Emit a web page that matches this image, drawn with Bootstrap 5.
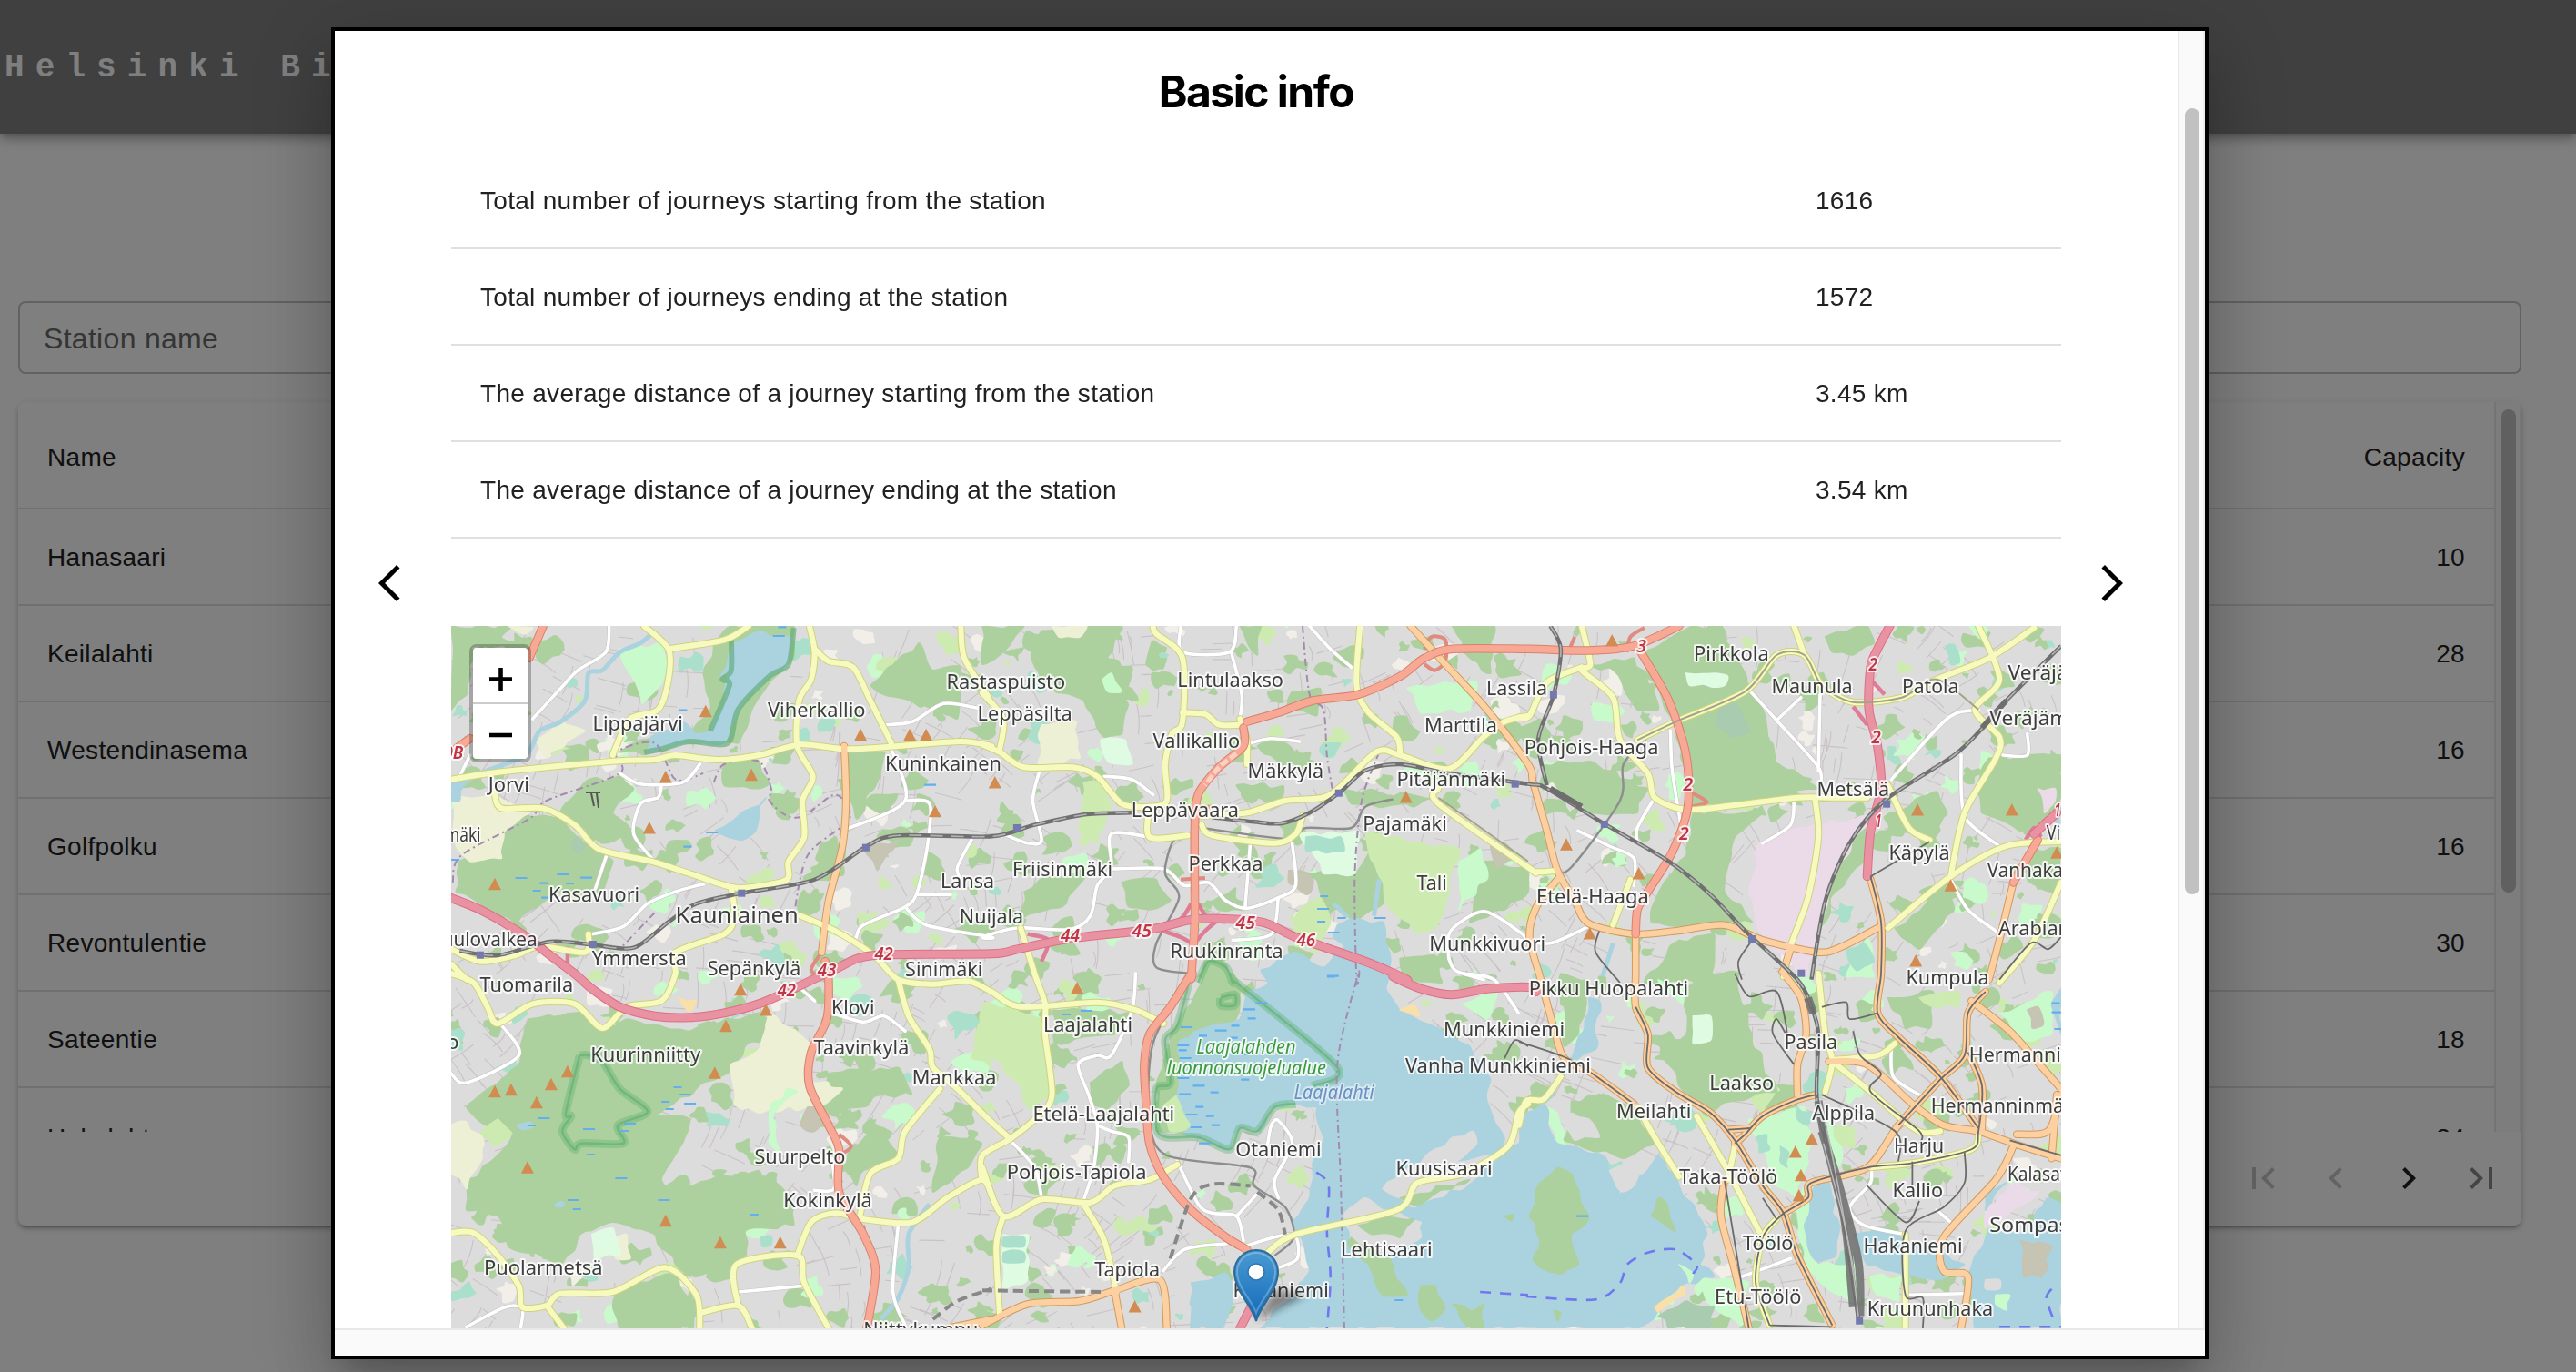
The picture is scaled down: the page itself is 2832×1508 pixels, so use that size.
<!DOCTYPE html>
<html lang="en">
<head>
<meta charset="utf-8">
<title>Helsinki Bikes</title>
<meta name="viewport" content="width=device-width, initial-scale=1">
<link href="https://cdn.jsdelivr.net/npm/bootstrap@5.3.0/dist/css/bootstrap.min.css" rel="stylesheet">
<style>
html,body{height:100%;overflow:hidden}
body{font-family:"Liberation Sans",Arial,sans-serif;font-size:28px;letter-spacing:.3px;color:#212121;line-height:40px;background:#fff}
.app-head{height:147px;background:#808080;color:#fff;box-shadow:0 4px 8px -2px rgba(0,0,0,.2),0 8px 10px 0 rgba(0,0,0,.14),0 2px 20px 0 rgba(0,0,0,.12);position:relative}
.app-title{font:700 36px/40px "Courier New","Liberation Mono",monospace;letter-spacing:12.1px;padding:3px 0 0 5px;white-space:nowrap}
.app-main{padding:184px 60px 0 20px}
.search-box{height:80px;border:2px solid #c4c4c4;border-radius:8px;padding:2px 0 0 26px;font-size:32px;color:#6b6b6b}
.station-card{margin-top:31px;height:905px;border-radius:8px;overflow:hidden;box-shadow:0 6px 2px -4px rgba(0,0,0,.2),0 4px 4px 0 rgba(0,0,0,.14),0 2px 10px 0 rgba(0,0,0,.12)}
.station-scroll{height:802px}
.line-row{height:106px;border-bottom:2px solid #e0e0e0;padding:2px 32px 0;flex:none}
.line-row.first{height:118px;padding-top:5px}
.station-scroll .line-row:last-child{padding-top:6px}
.track{width:30px;background:#fafafa;border-left:2px solid #e8e8e8;border-right:2px solid #ededed;padding-left:6px;flex:none}
.thumb{width:16px;border-radius:8px;background:#c1c1c1}
.pager{height:102px;padding-right:4px}
.pager-btn{width:80px;height:80px;padding:16px;border:0;background:none;line-height:0}
.info-modal{position:absolute;left:364px;top:30px;width:2064px;height:1464px;border:4px solid #000;background:#fff;box-shadow:0 22px 30px -14px rgba(0,0,0,.2),0 48px 76px 6px rgba(0,0,0,.14),0 18px 92px 16px rgba(0,0,0,.12)}
.info-body{height:1426px;overflow:hidden}
.side{width:128px;padding-top:583px;line-height:0}
.info-title{font:700 48px/58px Inter,sans-serif;letter-spacing:-1.5px;color:#000;margin:38px 0}
.info-value{width:270px;padding-left:32px}
.map-wrap{margin-top:96px;height:772px;position:relative}
.map-wrap>svg{display:block}
.bottom-track{height:30px;background:#fafafa;border-top:2px solid #e8e8e8}
.zoom-box{position:absolute;left:20px;top:20px;border:4px solid rgba(0,0,0,.25);border-radius:8px;background-clip:padding-box;overflow:hidden}
.zoom-btn{width:60px;height:60px;background:#fff;border:0;padding:0;display:block;line-height:0}
.zoom-btn+.zoom-btn{border-top:2px solid #ccc;height:62px}
#map text{font-family:"Noto Sans",sans-serif;fill:#3d3d3d;paint-order:stroke;stroke:#fff;stroke-opacity:.8;stroke-width:4px;stroke-linejoin:round;letter-spacing:0}
</style>
<script src="https://cdn.jsdelivr.net/npm/bootstrap@5.3.0/dist/js/bootstrap.bundle.min.js"></script>
</head>
<body>
<header class="app-head d-flex align-items-center"><div class="app-title">Helsinki Bikes</div></header>
<main class="app-main">
  <div class="search-box d-flex align-items-center">Station name</div>
  <div class="station-card bg-white">
    <div class="station-scroll d-flex overflow-hidden">
      <div class="flex-grow-1 d-flex flex-column">
        <div class="line-row first d-flex align-items-center justify-content-between"><span>Name</span><span>Capacity</span></div>
        <div class="line-row d-flex align-items-center justify-content-between"><span>Hanasaari</span><span>10</span></div>
        <div class="line-row d-flex align-items-center justify-content-between"><span>Keilalahti</span><span>28</span></div>
        <div class="line-row d-flex align-items-center justify-content-between"><span>Westendinasema</span><span>16</span></div>
        <div class="line-row d-flex align-items-center justify-content-between"><span>Golfpolku</span><span>16</span></div>
        <div class="line-row d-flex align-items-center justify-content-between"><span>Revontulentie</span><span>30</span></div>
        <div class="line-row d-flex align-items-center justify-content-between"><span>Sateentie</span><span>18</span></div>
        <div class="line-row d-flex align-items-center justify-content-between"><span>Hakalehto</span><span>24</span></div>
      </div>
      <div class="track pt-2"><div class="thumb" style="height:531px"></div></div>
    </div>
    <div class="pager d-flex align-items-center justify-content-end">
      <button class="pager-btn" aria-label="First page"><svg width="48" height="48" viewBox="0 0 24 24" fill="#c6c6c6"><path d="M18.41 16.59L13.82 12l4.59-4.59L17 6l-6 6 6 6zM6 6h2v12H6z"/></svg></button>
      <button class="pager-btn" aria-label="Previous page"><svg width="48" height="48" viewBox="0 0 24 24" fill="#c6c6c6"><path d="M15.41 16.59L10.83 12l4.58-4.59L14 6l-6 6 6 6z"/></svg></button>
      <button class="pager-btn" aria-label="Next page"><svg width="48" height="48" viewBox="0 0 24 24" fill="#212121"><path d="M10 6L8.59 7.41 13.17 12l-4.58 4.59L10 18l6-6z"/></svg></button>
      <button class="pager-btn" aria-label="Last page"><svg width="48" height="48" viewBox="0 0 24 24" fill="#8a8a8a"><path d="M5.59 7.41L10.18 12l-4.59 4.59L7 18l6-6-6-6zM16 6h2v12h-2z"/></svg></button>
    </div>
  </div>
</main>
<div class="modal-backdrop show"></div>
<div class="modal d-block overflow-hidden" role="dialog">
  <div class="info-modal">
    <div class="d-flex">
      <div class="info-body d-flex flex-grow-1">
        <div class="side"><svg width="48" height="48" viewBox="0 0 24 24" style="margin-left:36px"><path d="M17.77 3.77 16 2 6 12l10 10 1.77-1.77L9.54 12z"/></svg></div>
        <div class="flex-grow-1">
          <h2 class="info-title text-center">Basic info</h2>
          <div class="line-row d-flex align-items-center"><span class="flex-grow-1">Total number of journeys starting from the station</span><span class="info-value">1616</span></div>
          <div class="line-row d-flex align-items-center"><span class="flex-grow-1">Total number of journeys ending at the station</span><span class="info-value">1572</span></div>
          <div class="line-row d-flex align-items-center"><span class="flex-grow-1">The average distance of a journey starting from the station</span><span class="info-value">3.45 km</span></div>
          <div class="line-row d-flex align-items-center"><span class="flex-grow-1">The average distance of a journey ending at the station</span><span class="info-value">3.54 km</span></div>
          <div class="map-wrap">
            <svg id="map" width="1770" height="772" viewBox="496 688 1770 772"></svg>
            <div class="zoom-box">
              <button class="zoom-btn" aria-label="Zoom in"><svg width="60" height="60"><path d="M18 34.5h25M30.5 22v25" stroke="#000" stroke-width="4.6"/></svg></button>
              <button class="zoom-btn" aria-label="Zoom out"><svg width="60" height="60"><path d="M18 34h25" stroke="#000" stroke-width="4.6"/></svg></button>
            </div>
          </div>
        </div>
        <div class="side"><svg width="48" height="48" viewBox="0 0 24 24" style="margin-left:32px"><path d="M6.23 20.23 8 22l10-10L8 2 6.23 3.77 14.46 12z"/></svg></div>
      </div>
      <div class="track" style="padding-top:85px"><div class="thumb" style="height:864px"></div></div>
    </div>
    <div class="bottom-track"></div>
  </div>
</div>
<script>
// Map sheets: every geometry string starts with a sheet letter and lists x,y pairs in that sheet's grid.
const sheet={A:[490,680],B:[1080,680],C:[1670,680],D:[490,1070],E:[1080,1070],F:[1670,1070]};
const KX=600/1568,KY=1/3;
function pts(s){let o=sheet.A;const r=[];for(const t of s.trim().split(/\s+/)){if(sheet[t]){o=sheet[t];continue}const[x,y]=t.split(',').map(Number);r.push([o[0]+x*KX,o[1]+y*KY])}return r}
const f=n=>n.toFixed(1);
function curve(p){let d='M'+f(p[0][0])+' '+f(p[0][1]);for(let i=0;i<p.length-1;i++){const a=p[i-1]||p[i],b=p[i],c=p[i+1],e=p[i+2]||c,k=7;d+='C'+[b[0]+(c[0]-a[0])/k,b[1]+(c[1]-a[1])/k,c[0]-(e[0]-b[0])/k,c[1]-(e[1]-b[1])/k,c[0],c[1]].map(f).join(' ')}return d}
let seed=7;const rnd=()=>(seed=(seed*16807)%2147483647)/2147483647;
// shoreline and forest edges get small irregularities between their corner points
function rough(p){const r=[];for(let i=0;i<p.length;i++){const a=p[i],b=p[(i+1)%p.length],L=Math.hypot(b[0]-a[0],b[1]-a[1]),n=Math.max(1,Math.round(L/11));for(let j=0;j<n;j++){const t=j/n,q=j?6:0;r.push([a[0]+(b[0]-a[0])*t+(rnd()-.5)*q,a[1]+(b[1]-a[1])*t+(rnd()-.5)*q])}}r.push(r[0]);return r}
let out='<rect x="496" y="688" width="1770" height="772" fill="#dddcdc"/>';
const area=(c,l,extra='')=>{for(const s of l)out+=`<path d="${curve(rough(pts(s)))}Z" fill="${c}" stroke="${c}" stroke-width="1.5" stroke-linejoin="round" ${extra}/>`};
const line=(c,w,l,extra='')=>{out+=`<g fill="none" stroke="${c}" stroke-width="${w}" stroke-linejoin="round" ${extra}>`+l.map(s=>`<path d="${curve(pts(s))}"/>`).join('')+'</g>'};
const road=(c,cs,w,l)=>{line(cs,w+2,l,'stroke-linecap="round"');return()=>line(c,w,l,'stroke-linecap="round"')};
function blob(x,y,r,c){const p=[];for(let i=0;i<10;i++){const a=i/10*6.283,q=r*(.4+rnd()*.8);p.push([x+Math.cos(a)*q*1.2,y+Math.sin(a)*q])}p.push(p[0]);out+=`<path d="${curve(p)}Z" fill="${c}"/>`}
// residential texture: side streets and small greens
let mesh='';for(let i=0;i<1700;i++){const x=490+rnd()*1780,y=685+rnd()*780,a=(Math.sin(x/170)+Math.cos(y/120))*.8+(rnd()<.5?0:1.57),L=12+rnd()*28;mesh+=`M${f(x)} ${f(y)}q${f(Math.cos(a)*L/2+rnd()*5)} ${f(Math.sin(a)*L/2)} ${f(Math.cos(a)*L)} ${f(Math.sin(a)*L)}`}
out+=`<path d="${mesh}" fill="none" stroke="#c9c2c6" stroke-width="1.1"/>`;
for(let i=0;i<1050;i++){const q=rnd();blob(490+rnd()*1780,685+rnd()*780,3+rnd()*13,q<.58?'#add19e':q<.72?'#cdebb0':q<.86?'#c8facc':q<.94?'#f2efe9':'#aae0cb')}
area('#add19e',[
'A 16,24 190,24 160,60 240,95 75,95 60,250 16,300','A 40,800 170,740 200,640 330,660 400,740 480,800 450,900 380,930 330,900 240,960 200,1010 100,940 30,900','A 380,570 500,520 540,560 480,640 530,700 450,740 380,680 330,640',
'A 740,180 800,40 820,24 1000,24 1000,130 900,260 840,410 760,400 600,440 500,440 560,400 700,380 760,300','A 1220,220 1360,80 1400,170 1480,160 1470,330 1300,260 1240,240','A 800,480 900,470 930,540 880,560 800,550','A 1160,440 1260,440 1230,560 1180,660 1160,560','A 1030,850 1130,770 1100,860 1030,870','A 930,580 1020,600 1000,640 940,620',
'B 0,24 120,24 60,110 0,150','B 170,40 290,24 400,24 360,130 430,160 400,380 350,390 290,270 170,210 140,120','B 890,240 970,230 960,320 880,300','B 740,24 800,24 790,120','B 790,420 870,410 920,470 860,480','B 1030,560 1300,590 1240,620 1060,610','B 1120,740 1180,800 1190,900 1140,950 1080,990 980,950 960,860 910,830 1070,840','B 1440,800 1568,820 1568,900 1500,960 1400,1000 1420,900','B 400,870 500,860 540,930 480,960 420,950','B 120,900 200,850 300,830 240,940 110,990','B 1200,1120 1300,1110 1320,1200 1220,1190','B 1350,24 1470,24 1460,180 1400,130',
'C 350,130 500,24 580,24 640,160 700,300 740,480 860,560 700,600 500,620 490,560 440,330','C 500,640 700,640 620,720 590,900 670,1000 500,1010 380,1000 380,960 440,840 480,780','C 560,420 740,480 840,530 700,610 520,600','C 880,60 1000,24 1020,80 960,120 900,110','C 1350,460 1557,450 1557,640 1440,700 1330,640 1310,560','C 1070,640 1200,570 1230,640 1180,710 1100,700','C 60,480 200,470 370,560 340,640 200,640 100,540','C 0,360 60,330 90,380 50,460 20,440','C 200,150 330,130 370,210 400,300 340,300 280,180','C 900,720 1000,660 990,800 910,900 860,1050 850,1000','C 1480,760 1557,760 1540,900 1460,860','C 460,1060 560,1040 560,1200 360,1200','C 1080,1020 1240,880 1250,960 1150,1090',
'D 240,150 400,130 470,180 520,150 700,190 900,130 960,200 860,240 820,320 720,380 600,470 700,480 680,560 620,680 640,710 760,680 900,650 960,700 1000,760 1000,830 860,850 860,950 720,1000 660,960 600,860 480,820 400,850 330,960 180,900 150,800 60,780 60,680 130,620 190,530 100,490 60,440 210,300','D 500,1040 640,990 720,1080 710,1170 500,1170 480,1100','D 1040,470 1100,330 1300,310 1340,400 1260,400 1120,470','D 1160,570 1250,510 1300,600 1200,650 1180,700 1150,650','D 1420,540 1540,560 1500,640 1400,720',
'E 600,100 640,0 720,0 740,40 740,90 720,160 640,180 580,220 560,400 600,520 500,520 500,380 540,200','E 310,360 400,290 420,370 360,440 310,420','B 620,1180 640,1130 700,1140 720,1200','E 200,120 420,130 380,200 210,230','E 0,1110 60,1120 40,1170 0,1170',
'F 500,0 630,0 640,100 700,300 740,390 620,420 540,470 500,420 430,300 390,280 430,240 480,200 480,80','F 1060,80 1190,60 1180,180 1110,180','F 120,0 200,20 170,200 130,240','F 1380,160 1450,100 1420,180']);
area('#cdebb0',['E 0,100 80,110 170,150 200,300 200,400 140,450 90,350 0,230','B 1100,700 1170,720 1370,760 1340,900 1300,1020 1240,1030 1160,940','D 1530,170 1568,130 1568,310 1510,280','D 150,480 190,530 140,570 100,530','B 290,540 350,540 370,620 330,740 280,700','E 560,400 600,500 540,520 520,440','B 900,980 970,920 1000,1000 960,1100 900,1080','F 1000,1000 1090,1000 1080,1060 1020,1050','E 380,840 460,800 500,840 400,860','F 1150,80 1260,60 1260,110 1170,100']);
area('#eef0d5',['A 16,590 140,580 240,640 170,700 160,790 70,800 30,750','D 930,130 1060,240 1040,350 1140,380 1090,430 900,460 830,430 820,300 900,250','D 16,500 60,490 110,560 90,640 60,710 16,660','A 260,400 330,340 400,370 290,460','B 170,350 270,340 280,460 160,480','B 200,24 300,24 280,60 220,60','A 180,24 230,50 250,30','D 470,880 520,860 530,940 490,940']);
area('#c8facc',['A 500,100 630,80 630,180 600,240 565,280 540,200','B 1220,230 1420,210 1400,300 1260,310','B 1370,800 1430,760 1450,860 1370,960','B 345,200 370,180 400,240 360,240','D 930,450 980,380 1010,390 940,470 960,590 930,560','F 560,1100 500,990 560,1010 660,1020 640,1160','F 660,480 820,440 840,560 800,740 740,700','F 820,700 840,760 830,900 860,960 980,960 980,1080 900,1050 820,960 800,800','F 1380,130 1530,60 1530,200 1450,220','F 880,440 930,600 900,660 880,560','C 1000,1050 1020,1180 940,1180','E 1380,100 1480,60 1450,150','F 80,440 110,560 140,580 110,460','F 400,20 480,40 470,100 410,60']);
area('#dffce2',['B 910,710 1080,700 1070,840 980,840','C 480,180 600,190 590,220 490,220','D 420,860 480,840 500,930 430,940','E 60,860 130,860 130,1010 60,1040','F 500,140 550,140 550,220 500,230','B 340,400 410,400 430,480 360,470']);
area('#aae0cb',['B 930,720 1030,720 1040,765 930,765','F 680,540 710,530 720,580 690,590','F 750,570 775,590 770,640 750,620','F 800,440 840,460 830,500 800,480','C 940,1090 990,1070 1020,1130 970,1160','E 60,870 120,870 120,900 60,900','E 60,920 120,920 120,950 60,950','D 905,870 935,865 935,895 910,900','C 1225,90 1250,85 1265,145 1240,150']);
area('#c6c4b3',['A 1200,760 1300,730 1240,830','D 1040,440 1100,460 1060,520 1020,500','F 1460,120 1490,110 1505,170 1475,180','B 880,830 950,860 930,910 880,870','B 1460,750 1500,740 1530,790 1480,820']);
area('#ebdbe8',['C 690,740 850,680 1010,650 900,850 830,1180 740,1100 680,1000 660,900','C 1490,560 1540,560 1540,600 1510,640','F 1420,690 1490,720 1380,820 1340,840 1345,770']);
area('#a9cbaf',['C 580,290 620,280 665,370 610,390 565,350','A 360,740 380,720 400,750 380,775']);
area('#aad3df',['A 830,80 880,50 990,60 980,150 930,190 840,300 800,410 700,405 620,430 580,440 590,390 680,340 720,380 760,370 800,280 810,180 790,190',
'A 920,590 890,700 850,730 775,700 850,640',
'B 1020,1010 1060,990 1150,1000 1170,1100 1170,1150 E 1160,50 1200,120 1290,170 1400,240 1460,350 1450,420 1490,520 1500,570 F 0,560 10,480 70,430 110,560 250,610 290,730 400,600 460,700 500,760 540,860 520,960 560,1000 480,1020 400,1110 340,1170 E 800,1170 850,1100 900,1050 940,980 920,880 890,820 940,740 950,620 980,540 960,440 900,430 840,440 790,520 740,510 710,580 620,540 580,530 600,500 560,400 570,220 640,180 740,150 760,60 B 820,1200 800,1160 900,1100 980,1150 1040,1080 1010,1050',
'E 600,1020 700,990 720,1060 690,1170 600,1170','F 850,700 890,690 920,850 910,930 860,950 830,900 820,830','F 960,860 1050,840 1110,880 1280,960 1200,1010 1100,990 1000,960','F 1557,760 1520,740 1440,860 1350,840 1310,930 1290,1000 1310,1170 1557,1170','F 1340,730 1400,690 1340,780','F 200,80 230,90 220,250 170,280 100,400 70,430 130,300 160,250 190,150','F 1557,50 1530,100 1557,200','D 205,500 240,490 250,505 220,515','D 315,760 335,752 340,765 320,770','A 16,540 60,540 40,600 16,600','C 1557,620 1540,650 1557,700']);
area('#c6c4b3',['F 1440,880 1530,900 1500,1000 1450,1000']);
area('#dddcdc',['E 1150,710 1300,580 1410,520 1420,560 1360,620 1480,600 1400,690 1240,770 1200,740','E 1040,790 1100,740 1130,760 1260,820 1260,870 1170,920 1060,890','F 260,650 300,630 370,640 300,720','F 1340,1010 1380,1010 1380,1040 1340,1040']);
area('#add19e',['E 1200,740 1400,680 1250,765','E 1060,870 1100,900 1170,940 1220,1060 1150,1060 1110,960 1050,890','E 1080,830 1150,800 1240,810 1200,870 1120,860','F 60,690 110,640 150,660 200,800 150,860 170,960 120,990 80,980 40,940 60,880 30,800','E 1260,1030 1300,1030 1330,1100 1290,1145 1260,1110','E 1350,1090 1400,1110 1440,1090 1440,1170 1390,1160','F 380,800 400,740 430,780 450,850','F 150,420 250,400 330,440 390,560 300,610 130,550','F 100,1110 120,1120 110,1145','E 1500,800 1525,795 1520,815']);
area('#c8facc',['F 1370,1060 1410,1060 1400,1110 1370,1090','F 1010,1000 1100,1000 1090,1080 1030,1060','F 460,960 500,990 490,1020']);
area('#a9cbaf',['F 400,1130 480,1080 560,1100 550,1170 430,1170']);
area('#f9e0a8',['F 390,1100 470,1030 475,1060 400,1115','E 1200,120 1240,105 1255,140','D 670,80 720,90 700,125']);
area('#dddcdc',['F 120,460 200,480 230,540 160,550']);
line('#aad3df',5,['A 600,40 560,80 500,110 450,170 410,180 400,270 330,340 270,370 230,450 120,500 16,560','D 1390,760 1330,860 1330,970 1300,1070 1250,1140','B 1140,860 1125,980','C 270,1070 240,1180','B 1010,940 1050,985']);
// nature reserve outlines
const reserve=['B 620,1200 650,1130 700,1150 720,1200 E 740,40 1020,310 950,370','E 900,430 840,440 790,520 740,510 710,580 620,540 530,540 500,510 500,380 540,360 525,220 560,170 600,0','D 385,270 345,460 360,470 335,520 370,580 390,560 510,560 495,500 580,455 500,380 450,290 410,270 385,270','E 685,80 725,70 725,105 685,105 685,80'];
line('#5cb070',9,reserve,'opacity=".38"');line('#4da862',2.5,reserve,'opacity=".45"');
line('#5ba974',6,['A 1000,30 985,150 930,190 840,300 810,410 700,405 620,430 570,440','A 820,60 820,170 795,200 815,220 760,370'],'opacity=".6"');
line('#a58ab0',2,['A 20,870 45,780 240,660 290,600 500,510 490,440 600,410 660,530 740,510','A 770,540 800,480 900,470 935,560 930,600 980,650 1030,650 1120,580 1160,660 1040,780 1000,980','A 600,970 500,1090','B 920,24 940,250 980,300 990,450 1005,560','B 1140,440 1090,600 1070,850 1075,1200 E 1080,0 1020,300 1030,700 1040,1170'],'stroke-dasharray="8 4 2 4"');
line('#6f78ee',2.6,['F 20,1065 220,1075 290,1020 310,960 370,920 450,910 510,960 500,990','E 960,655 995,700 990,850 1000,1000 990,1170','E 1430,1050 1568,1060','F 1530,1040 1515,1070 1535,1140','F 1380,1165 1557,1165'],'stroke-dasharray="12 10"');
const white=['A 470,24 460,110 380,170 330,230 250,330','A 70,450 40,520','A 500,510 560,545 680,540 730,480','A 620,550 610,590 560,610 540,710 600,800','A 1280,430 1320,600 1160,690','A 1320,600 1390,610 1385,740 1355,900 1320,950 1200,1010 1180,1050','A 1355,910 1450,910','A 1320,950 1380,1010 1568,1050 B 0,1050 100,1020 250,1025 310,980 330,880 370,820 370,710 480,720','B 370,825 520,825 580,880 650,870 700,930 760,955 850,920 900,880 890,740','B 850,920 830,1040 720,1060','B 570,24 575,110 710,110 730,24','B 715,110 745,250 740,330','B 165,500 145,600 170,730 130,740 60,710','B 350,520 430,530 490,580','B 770,410 830,395 910,405','B 940,24 1000,100 1060,160','B 770,740 755,950','A 465,770 430,890','A 740,875 660,900 580,940 510,1015 420,1040','A 1260,350 1340,340 1430,280 1530,295','A 1510,730 1470,820 1480,860','B 1340,1120 1345,1030 1440,965 1540,1030 1568,1060','B 1340,1120 1360,1160 1440,1190','C 0,1060 90,1070 200,1015','C 665,240 740,335 860,490 865,560','C 865,250 860,500','C 740,335 810,260','C 1070,530 1230,330 1320,300','C 1270,450 1280,650 1380,750','C 1240,860 1290,960 1370,1030','C 435,370 440,500 465,680','C 390,590 340,690 340,740','C 170,700 260,750 330,790 330,880','C 790,600 780,680 700,740','C 1460,380 1460,450 1390,450','D 160,170 210,270 60,360 16,330','E 440,0 430,120 370,270 330,270 275,300 305,400 330,500 320,640 290,750','E 330,500 370,520 420,540 420,620','E 560,620 620,760 660,790 730,800 750,880','E 520,980 580,910 700,890','E 80,550 150,640 170,740','E 820,560 830,500 850,485 890,560 840,680 850,740','E 730,800 795,720','E 750,900 890,860 905,940 850,970','D 1300,830 1285,1050 1320,1160','D 840,1050 1030,1030','D 60,1165 170,1100 220,1105 215,1170','E 1380,0 1470,20 1540,130','D 1110,130 1200,160 1260,140 1320,190','D 1000,30 1060,90','D 1110,610 1115,710 1060,715','F 1010,620 1010,690 950,770 990,830 1110,860','F 1070,240 1075,340 1150,400','F 640,1000 780,940','F 1110,1060 1280,1055','F 1200,780 1250,830'];
line('#c4c0c0',4.6,white);line('#fff',3.6,white,'stroke-linecap="round"');
line('#8d8d8d',2.4,['B 580,710 545,740 525,840 565,920 500,1070 500,1150 600,1170','B 630,690 870,725 930,690 1060,690 1100,620 1180,595','E 590,20 490,230 480,480 530,600 770,640 780,700 870,770 895,870 840,930','C 370,390 300,480 290,600 150,820 100,835']);
const yl=['A 16,530 160,505 480,470 600,465 660,450 780,465 900,450 1020,415 1150,430 1300,420 1480,405 1568,420 B 0,415 50,440 120,490 260,490 330,520 400,610 480,620 530,600 525,480 545,380 575,340 575,130 500,50 490,24','A 570,24 640,100 640,200 610,300 530,330 490,420 480,450','A 640,100 800,70 870,24','A 1045,24 1060,110 1050,200 1015,270 1010,420 1055,520 1025,600 1030,720 985,800 980,860 880,885 820,885 700,840 590,800 440,760 370,680 280,625 160,625 140,570','A 1060,100 1100,140 1170,160 1220,270 1280,410','A 1480,24 1490,130 1560,260 B 0,245 60,330 50,430','A 1020,980 1120,1030 1230,1110 D 1300,20 1400,35 1500,25 1568,60 E 110,110 330,95 440,120 520,165','D 1300,20 1330,140 1390,250 1400,310 1470,380 1568,490 E 80,545','D 1420,380 1320,520 1300,610 1220,660 1190,800','D 1010,930 1050,820 1120,790 1200,810 1340,820 1440,740 1540,680 1568,730','D 1540,680 E 0,600 80,545 160,470 200,400 180,200 180,100 150,0 B 110,1020','E 0,640 60,800 170,745 310,755 380,700 480,680 560,630','E 60,800 40,900 50,1130','E 290,760 350,880 385,1050','D 16,855 80,855 150,930 210,1030 220,1100 290,1095 330,1055 480,1050 630,970 720,1060 730,1170','D 730,1120 840,1095 880,1170','D 840,1095 835,960 1010,930 1030,1020 1100,1170','D 290,1095 340,1170','D 16,0 80,30 120,110 150,165 250,100 370,100 450,180 520,110 620,90 660,0 A 660,1100 800,1040 830,980 820,890','A 16,1090 100,1130 200,1110 270,1080 400,1100 410,1040','A 16,1140 60,1190','B 740,330 760,400 760,480','B 575,310 640,315 680,350 740,350','B 630,650 760,640 870,600 1000,580 1130,440 1200,450 1340,495 1440,390 1500,340 1568,320','B 1085,24 1075,220 1110,310 1190,390 1200,450','B 630,680 660,715 840,740 900,710 920,650','B 480,620 480,720 590,715','B 1310,560 1310,610 1568,820 C 50,835 110,830','C 180,24 205,150 180,170 270,260 290,400 370,510 390,590 480,630 620,615 800,590 900,590 1000,590','C 180,160 80,210 30,320 0,325','C 340,400 450,340 650,240 740,120 820,120 870,220 960,275 1100,260 1200,200 1350,130 1480,30','C 790,24 820,120','C 1320,24 1380,200 1310,300 1380,390 1370,460 1280,640 1240,850','C 1060,1020 1240,850 1400,750 1557,735','C 850,590 860,720 830,920 780,1080 760,1180','C 1060,550 1120,690 1180,730','C 1557,870 1480,1060 1380,1200','C 320,860 270,1010','F 860,0 880,200 900,290 880,390','F 900,290 1010,390 1110,490 1160,525 1210,520','F 1080,230 1030,270 900,285','F 0,500 20,420 70,415 120,340','F 340,440 400,560 460,670','F 510,470 600,650 690,850','F 720,1160 680,1020 700,870 740,810','F 620,570 600,680','F 1000,640 1130,625 1300,580 1320,520','F 1110,860 1110,1170','E 820,920 900,860 1190,780 1250,690 1380,660 1510,570 1540,460 1568,430'];
const og=['A 1145,420 1150,600 1140,750 1100,930 1080,1100','B 1230,24 1330,150 1450,300 1568,480 C 40,540 80,700 110,830 160,930 200,1005 330,1040 450,1030 590,1010 700,1060 860,1100 930,1080 1030,1020','C 110,860 50,950 30,1050 60,1180 F 60,10 100,180 130,280 210,330 330,430','C 335,1040 335,1170 F 335,110 370,200 370,310 450,390 550,460 620,550 700,700 760,790 800,930 900,1160','C 1010,860 1040,1000 1040,1170 F 1030,130 1090,210 1210,340 1320,510','F 850,400 790,420 700,470 650,530 620,560','F 600,515 665,510','F 760,790 830,740 840,690 1000,640 1090,500 1210,350 1280,270 1290,130 1340,60','F 890,290 1000,300 1130,430 1220,500 1320,520 1420,560 1557,610','F 1300,90 1410,190 1480,280 1557,380','F 1420,570 1370,680 1220,870 1220,980 1290,1000 1270,1170','C 1420,870 1380,1060 1350,1190','F 590,680 580,800 620,980 660,1170','C 780,1090 760,1160 F 760,0 810,80 825,200 800,300 800,400','E 0,1160 130,1090 280,1080 380,1045 510,1010 530,1170','E 380,1045 400,1170','F 1290,260 1330,370 1330,510','F 1557,400 1520,520 1430,530','F 1545,400 1530,610','D 1440,1170 1568,1140'];
const rd=['B 750,360 750,420 680,490 620,580 610,700 610,1000 600,1180 E 600,0 540,110 480,200 465,300 470,420 480,560 520,670 600,780 700,870 760,910','B 760,340 850,310 950,270 1080,250 1200,190 1270,130 1350,100 1568,100 C 200,105 330,90 460,24','C 350,110 430,270 480,450 485,620 440,770 370,900 340,960 335,1040','A 1090,1130 D 1100,20 1095,150 1050,260 1045,370 1100,500 1130,580 1130,720 1200,860 1235,980 1210,1170','A 280,24 240,130','A 70,395 16,440','C 1490,730 1420,870'];
const ramps=['B 1270,100 1290,60 1330,70 1330,140 1300,170 1270,150','C 310,110 320,60 360,30','C 145,100 160,60','C 490,570 540,605 490,620','D 1130,530 1165,570 1130,600','B 570,860 640,855','D 1200,830 1205,880','A 1080,1100 1050,1160 1100,1190','B 590,620 660,620'];
const pk=['A 0,915 100,960 220,1040 300,1110 D 370,0 420,50 500,110 600,140 700,145 800,130 900,100 1000,50 A 1120,1155 1230,1110 1568,1105 B 100,1090 250,1055 480,1025 620,990 800,1000 900,1050 1100,1130 1220,1190 E 1180,10 1260,50 1350,70 1450,50 1568,45 F 50,60','C 1065,24 1030,100 1010,160 1005,300 1030,420 1040,560 1010,700 1000,850','C 1545,640 1480,710','E 790,1060 740,1170'];
const pr=['B 600,940 570,990 510,1025','B 520,1030 570,1050 600,1070','B 620,940 650,990 700,1000','B 610,1070 640,1030 670,1000','B 130,1040 190,1060 170,1130','C 1010,200 1050,250','C 960,290 1000,350','C 1455,730 1480,690 1500,720','A 350,1080 350,1140'];
line('#e08a80',4,ramps);line('#de7d95',4.5,pr);
const a1=road('#f7fabf','#cfd27c',6,yl),a2=road('#fcd0a0','#cf9a60',6.5,og);a1();a2();
road('#f8a995','#d9806c',7.5,rd)();road('#e892a2','#dd6f88',8,pk)();
line('#f8a995',7.5,['B 610,900 610,1000 603,1120']);
line('#fff',5,['B 730,445 680,490 640,550'],'opacity=".45" stroke-dasharray="9 3"');
// tram and rail
line('#6b6b6b',1.8,['F 335,110 370,200 370,310 450,390 550,460 620,550 700,700 760,790 800,930 900,1160','C 1010,850 1040,1000 1040,1170 F 1030,130 1090,210 1210,340 1320,510','F 850,400 790,420 700,470 650,530 620,560','F 760,790 830,740 840,690 1000,640 1130,625 1300,580 1320,520 1330,370 1290,260','F 1090,500 1210,350 1280,270 1290,130 1340,60','F 620,0 660,75 740,60 770,200 740,150 730,200 790,300','F 870,400 1080,520 1090,620','F 1130,620 1130,700','F 1280,590 1280,690 1220,770 1110,850 1110,1060 1160,1070 1160,1170','F 1000,700 1110,820 1150,750','F 870,110 940,95 950,150 1030,130','F 960,190 980,270 1040,330 1010,390 1150,520 1150,560','C 1010,850 1180,735','C 670,1060 630,1130 640,1190','C 230,1030 220,1100 290,1200','C 1557,1050 1520,1090 1470,1070 1380,1190','F 0,225 130,275 210,330 330,430','F 720,1160 680,1020 700,870 760,790','F 700,740 740,810','F 590,680 660,1170','F 720,1160 900,1165','E 1500,280 1530,220 1568,240','F 600,515 665,510','F 1410,550 1557,600']);
line('#a3a38c',2,['C 340,400 450,340 650,240 740,120 820,120 870,220 960,275 1100,260 1200,200 1320,300','B 1310,590 1568,800']);
const rail=['A 40,1095 150,1110 300,1065 420,1075 540,1085 640,1000 720,940 850,905 1060,860 1210,750 1300,715 1568,718 B 150,680 300,645 430,640','B 660,655 780,670 860,675 940,640 1030,570 1100,500 1200,480 1340,510 1568,545 C 80,560 250,680 430,800 550,910 650,1030 800,1190 F 840,110 860,200 855,400 880,550 930,800 975,1140','C 1557,90 1400,270 1340,350 1250,450 1050,600 950,740 880,930 840,1190','C 90,24 120,100 100,250 55,400 80,550'];
line('#707070',4.4,rail);line('#b4b4b4',1.6,rail,'stroke-dasharray="14 9"');
line('#6e6e6e',9,['F 830,80 845,130','F 860,420 880,550 930,780 945,900 960,1100','F 870,520 920,700 975,950 980,1130'],'opacity=".85"');
line('#6e6e6e',6,['C 90,560 180,620','C 1400,270 1330,360']);
line('#bbb',1.5,['F 865,420 900,600 955,950 975,1130','F 850,200 855,400','F 875,560 930,800 965,1000']);
line('#888',4,['E 0,1045 350,1050','E 540,940 600,740 660,695 770,700','E 790,720 850,780 870,860','D 1400,1140 1470,1080 1568,1040'],'stroke-dasharray="11 6"');
// wetland strokes
const wet='A 16,795 A 200,855 A 270,872 A 320,843 A 345,873 A 387,854 A 250,897 A 275,920 A 670,302 A 940,57 A 955,28 A 748,705 A 683,752 A 1375,548 D 655,375 D 670,399 D 620,423 D 685,429 D 632,447 D 512,495 D 502,519 D 265,477 D 235,501 D 395,513 D 405,597 D 350,747 D 365,777 D 487,675 D 875,795 D 610,747 B 970,915 B 962,957 B 962,999 B 992,1035 B 1020,987 B 1125,987 B 990,1180 E 750,118 E 762,148 E 785,98 E 715,172 E 668,188 E 622,205 E 560,237 E 564,253 E 566,279 E 740,266 E 565,398 E 612,440 E 584,465 E 642,470 E 598,507 E 658,500 E 622,560 E 230,135 E 282,123 E 743,350 E 560,345 E 710,212 E 990,8 E 1185,1077 E 570,177 F 1530,98 F 1530,128 F 1538,183 F 165,800 E 655,392 E 605,370'.split(' ');
out+='<path stroke="#62aef0" stroke-width="2.2" d="';for(let i=0;i<wet.length;i+=2){const p=pts(wet[i]+' '+wet[i+1])[0];out+=`M${f(p[0])} ${f(p[1])}h${9+i%4*2}`}out+='"/>';
for(const p of pts('A 747,305 1192,383 1333,383 1380,383 632,522 878,515 585,690 1406,635 141,875 B 36,540 1217,588 C 267,72 136,745 344,840 203,1038 1145,630 1416,630 1240,880 1140,1128 1545,772 D 847,53 920,120 805,173 773,328 350,323 303,365 261,425 188,383 141,389 235,640 632,815 789,887 961,887 E 272,48 438,1098 F 841,545 794,588 810,665 804,732'))out+=`<path d="M${f(p[0])} ${f(p[1]-7)}l7 13.500h-14z" fill="#d28b50"/>`;
for(const p of pts('A 99,1109 423,1074 850,905 1207,755 B 99,690 1024,575 1531,545 C 99,251 245,678 1056,611 669,1056 811,1169 F 978,1145'))out+=`<rect x="${f(p[0]-4)}" y="${f(p[1]-4)}" width="8" height="8" fill="#7479ad"/>`;
// ski jump
out+='<path d="M644 871h16M650 872l3 14M656 872l2 16" fill="none" stroke="#555" stroke-width="2"/>';
// place names: sheet, left, right, baseline, text, size
const names=`A|422|682|370|Lippajärvi
A|925|1206|325|Viherkallio
A|1262|1597|502|Kuninkainen
A|122|240|570|Jorvi
A|-110|101|736|Lintumäki
A|295|557|933|Kasavuori
A|660|1013|1002|Kauniainen|24
A|-45|263|1080|Kuulovalkea
A|420|692|1144|Ymmersta
A|752|1020|1177|Sepänkylä
A|1320|1543|1180|Sinimäki
A|1422|1576|888|Lansa
A|1476|1660|1005|Nuijala
B|-103|238|230|Rastaspuisto
B|-14|258|335|Leppäsilta
B|560|865|225|Lintulaakso
B|490|740|425|Vallikallio
B|762|980|525|Mäkkylä
B|428|737|655|Leppävaara|22
B|86|374|848|Friisinmäki
B|592|806|832|Perkkaa
B|540|864|1120|Ruukinranta
B|1270|1479|375|Marttila
B|1448|1623|252|Lassila
B|1190|1503|553|Pitäjänmäki
B|1093|1335|698|Pajamäki
B|1248|1335|895|Tali
B|1284|1618|1094|Munkkivuori
C|502|718|137|Pirkkola
C|725|958|247|Maunula
C|1100|1263|247|Patola
C|1405|1755|200|Veräjälaakso
C|1352|1660|350|Veräjämäki
C|15|401|448|Pohjois-Haaga
C|856|1064|585|Metsälä
C|1062|1238|795|Käpylä
C|1515|1630|730|Viikki
C|1345|1740|851|Vanhakaupunki
C|50|373|938|Etelä-Haaga
C|1377|1725|1043|Arabianranta
D|98|366|61|Tuomarila
D|-130|38|248|Espoo
D|1108|1232|136|Klovi
D|1057|1331|268|Taavinkylä
D|416|732|291|Kuurinniitty
D|1340|1582|367|Mankkaa
D|887|1148|628|Suurpelto
D|970|1225|771|Kokinkylä
D|110|451|993|Puolarmetsä
D|1200|1530|1198|Niittykumpu
E|175|431|192|Laajalahti
E|145|552|485|Etelä-Laajalahti
E|70|472|677|Pohjois-Tapiola
E|322|510|999|Tapiola
E|727|974|602|Otaniemi
E|720|995|1067|Keilaniemi
E|1188|1465|667|Kuusisaari
E|1030|1293|934|Lehtisaari
E|1325|1673|208|Munkkiniemi
E|1215|1748|328|Vanha Munkkiniemi
F|28|487|73|Pikku Huopalahti
F|1112|1350|35|Kumpula
F|762|915|250|Pasila
F|1293|1557|292|Hermanni
F|547|732|383|Laakso
F|280|495|478|Meilahti
F|842|1022|482|Alppila
F|1183|1610|458|Hermanninmäki
F|1077|1221|592|Harju
F|460|743|692|Taka-Töölö
F|1073|1218|737|Kallio
F|1403|1675|683|Kalasatama
F|1352|1690|853|Sompasaari
F|643|788|913|Töölö
F|989|1274|922|Hakaniemi
F|562|811|1090|Etu-Töölö
F|1000|1362|1128|Kruununhaka`;
const put=(k,x0,x1,y,t,size,extra='')=>{const o=sheet[k];out+=`<text x="${f(o[0]+x0*KX)}" y="${f(o[1]+y*KY)}" textLength="${f((x1-x0)*KX)}" lengthAdjust="spacingAndGlyphs" style="font-size:${size}px;${extra}">${t}</text>`};
for(const r of names.split('\n')){const[k,a,b,y,t,z]=r.split('|');put(k,+a,+b,+y,t,z||21)}
put('E',615,900,263,'Laajalahden',21,'font-style:italic;fill:#3c9c3c');
put('E',530,988,334,'luonnonsuojelualue',21,'font-style:italic;fill:#3c9c3c');
put('E',895,1125,413,'Laajalahti',21,'font-style:italic;fill:#6c8fc4;stroke-opacity:.5');
for(const r of `A|1232|1285|1125|42
A|1068|1122|1180|43
D|953|1006|74|42
B|225|280|1066|44
B|430|486|1049|45
B|728|784|1022|45
B|903|957|1080|46
C|338|366|112|3
C|1005|1030|172|2
C|1013|1040|412|2
C|472|500|567|2
C|460|488|730|2
C|1024|1042|688|1
C|1538|1556|650|1
A|-60|50|462|110B`.split('\n')){const[k,a,b,y,t]=r.split('|');put(k,+a,+b,+y,t,19,'font-style:italic;font-weight:600;fill:#bf3545')}
// station marker
out+=`<defs><linearGradient id="pin" x1="0" y1="0" x2="0" y2="1"><stop offset="0" stop-color="#4a9bd3"/><stop offset="1" stop-color="#1268b8"/></linearGradient><filter id="soft"><feGaussianBlur stdDeviation="4"/></filter></defs>
<path d="M1381 1452L1402 1415L1436 1424Z" fill="#000" opacity=".4" filter="url(#soft)"/>
<path d="M1381 1452C1378 1438 1357 1418 1357 1398A24 24 0 0 1 1405 1398C1405 1418 1384 1438 1381 1452Z" fill="url(#pin)" stroke="#2e6c97" stroke-width="2"/>
<path d="M1381 1443C1377 1430 1360 1415 1360 1398A21 21 0 0 1 1402 1398C1402 1415 1385 1430 1381 1443Z" fill="none" stroke="#fff" stroke-opacity=".25" stroke-width="2"/>
<circle cx="1381" cy="1398" r="9" fill="#fff" stroke="#2f76ae" stroke-width="1.500"/>`;
document.getElementById('map').innerHTML=out;
</script>
</body>
</html>
